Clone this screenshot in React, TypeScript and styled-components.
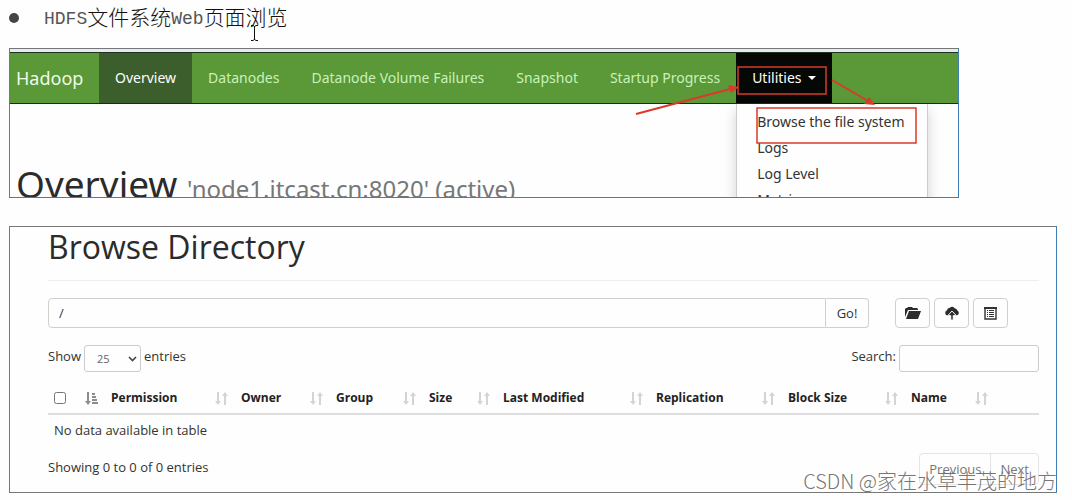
import React from "react";
import styled, { createGlobalStyle } from "styled-components";

const GlobalStyle = createGlobalStyle`
  * { box-sizing: border-box; }
  body {
    margin: 0;
    background: #fdfefd;
    color: #333;
    font-family: "Open Sans", "Noto Sans", "Noto Sans CJK SC", sans-serif;
    font-size: 13px;
    line-height: 20px;
  }
  button, input, select { font: inherit; color: inherit; margin: 0; }
  h1, h2, p, ul { margin: 0; padding: 0; font-weight: 400; }
  ul { list-style: none; }
`;

const Page = styled.main`
  position: relative;
  padding: 4px 15px 0 9px;
`;

const Topic = styled.h2`
  position: relative;
  display: flex;
  align-items: center;
  height: 28px;
  margin-bottom: 16px;
  font-family: "Noto Sans CJK SC", sans-serif;
  font-size: 21px;
  font-weight: 300;
  line-height: 28px;
  color: #111;
  &::before {
    content: "";
    width: 10px;
    height: 10px;
    margin-right: 25px;
    border-radius: 50%;
    background: #444;
  }
`;

const TopicText = styled.span`
  height: 32px;
`;

const Latin = styled.span`
  font-family: "Liberation Mono", monospace;
  font-size: 18px;
  line-height: 20px;
  vertical-align: 1px;
  color: #555;
`;

const TextCursor = styled.svg`
  position: absolute;
  left: 241px;
  top: 21px;
`;

const OverviewPanel = styled.section`
  position: relative;
  height: 150px;
  margin: 0 98px 28px 0;
  border: 1px solid #3f7fb5;
  border-top-color: #777;
  border-left-color: #777;
  padding-top: 3px;
  background: linear-gradient(#e4ecee, #e4ecee) top / 100% 3px no-repeat;
  font-family: "Noto Sans", "Open Sans", sans-serif;
  overflow: hidden;
`;

const NavBar = styled.nav`
  display: flex;
  height: 52px;
  border-top: 1px solid #1c3320;
  border-bottom: 1px solid #17300c;
  background: #5a9838;
  line-height: 50px;
`;

const Brand = styled.a`
  width: 89px;
  padding-left: 6px;
  color: #f0fbe8;
  font-size: 18px;
  text-decoration: none;
`;

const NavList = styled.ul`
  display: flex;
  font-size: 14px;
`;

const NavItem = styled.li`
  position: relative;
`;

const NavLink = styled.a<{ $tone?: "active" | "open" }>`
  display: flex;
  align-items: center;
  gap: 6px;
  padding: 0 16px;
  text-decoration: none;
  white-space: nowrap;
  color: ${(p) => (p.$tone ? "#fff" : "#c9f2b8")};
  background: ${(p) =>
    p.$tone === "active" ? "#3c5e2d" : p.$tone === "open" ? "#050805" : "transparent"};
`;

const Caret = styled.span`
  border: 4px solid transparent;
  border-top-color: #fff;
  border-bottom: 0;
`;

const Menu = styled.ul`
  position: absolute;
  top: 51px;
  left: 0;
  width: 192px;
  padding: 5px 0;
  border: 1px solid #ccc;
  border-top: 0;
  background: #fefefe;
  box-shadow: 0 6px 12px rgba(0, 0, 0, 0.18);
`;

const MenuLink = styled.a`
  display: block;
  padding: 0 20px;
  line-height: 26px;
  white-space: nowrap;
  color: #333;
  text-decoration: none;
`;

const OverviewTitle = styled.h1`
  padding: 56px 0 0 6px;
  font-size: 37px;
  line-height: 48px;
  color: #2b2b2b;
  white-space: nowrap;
  small { font-size: 24px; color: #777; }
`;

const Marks = styled.svg`
  position: absolute;
  left: 0;
  top: 0;
`;

const BrowsePanel = styled.section`
  border: 1px solid #777;
  border-right-color: #3f7fb5;
  padding: 0 17px 7px 38px;
`;

const BrowseTitle = styled.h1`
  padding: 0 0 13px;
  border-bottom: 1px solid #eee;
  margin-bottom: 17px;
  font-size: 32px;
  line-height: 40px;
  color: #2b2b2b;
`;

const Toolbar = styled.form`
  display: flex;
  gap: 4px;
  padding-right: 31px;
  margin-bottom: 17px;
`;

const PathGroup = styled.div`
  display: flex;
  flex: 1;
  margin-right: 22px;
`;

const PathInput = styled.input`
  flex: 1;
  min-width: 0;
  height: 30px;
  padding: 0 10px;
  border: 1px solid #d0d0d0;
  border-radius: 4px 0 0 4px;
  background: #fefefe;
`;

const Button = styled.button<{ $joined?: boolean }>`
  display: flex;
  align-items: center;
  justify-content: center;
  width: ${(p) => (p.$joined ? 43 : 35)}px;
  height: 30px;
  padding: 0;
  border: 1px solid #d0d0d0;
  border-left-width: ${(p) => (p.$joined ? 0 : 1)}px;
  border-radius: ${(p) => (p.$joined ? "0 4px 4px 0" : "4px")};
  background: #fefefe;
`;

const Controls = styled.div`
  display: flex;
  justify-content: space-between;
  height: 27px;
  margin-bottom: 11px;
`;

const Field = styled.label`
  display: flex;
  gap: 3px;
  line-height: 23px;
`;

const SelectWrap = styled.span`
  position: relative;
  svg { position: absolute; right: 4px; top: 11px; pointer-events: none; }
`;

const LengthSelect = styled.select`
  appearance: none;
  width: 57px;
  height: 27px;
  padding: 0 12px;
  border: 1px solid #ccc;
  border-radius: 3px;
  background: #fefefe;
  font-size: 11px;
  color: #666;
`;

const SearchInput = styled.input`
  width: 140px;
  height: 27px;
  border: 1px solid #ccc;
  border-radius: 3px;
  background: #fefefe;
`;

const Table = styled.table`
  width: 100%;
  table-layout: fixed;
  border-collapse: collapse;
  margin-bottom: 9px;
  thead tr { border-bottom: 2px solid #ddd; }
  th, td { padding: 0 7px 0 6px; text-align: left; white-space: nowrap; }
  th { height: 31px; color: #222; font-size: 12px; }
  td { height: 30px; }
`;

const HeadCell = styled.div`
  display: flex;
  align-items: center;
  justify-content: space-between;
  input { width: 12px; height: 12px; }
`;

const Footer = styled.div`
  display: flex;
  justify-content: space-between;
  line-height: 28px;
`;

const Pager = styled.div`
  display: flex;
  height: 32px;
  border: 1px solid #e4e4e4;
  border-radius: 4px;
`;

const PageButton = styled.button`
  padding: 0 9px;
  border: 0;
  background: none;
  color: #777;
  line-height: 28px;
  & + & { border-left: 1px solid #e4e4e4; }
`;

const Watermark = styled.p`
  position: absolute;
  right: 15px;
  bottom: -2px;
  font-family: "Noto Sans CJK SC", sans-serif;
  font-size: 20px;
  font-weight: 300;
  line-height: 28px;
  color: rgba(100, 100, 100, 0.9);
  pointer-events: none;
`;

const SortIcon = () => (
  <svg width="13" height="13" viewBox="0 0 13 13" fill="#d4d4d4" aria-hidden="true">
    <path d="M2 0h2v9h2L3 13 0 9h2zM9 13h2V4h2L10 0 7 4h2z" />
  </svg>
);

const SortedIcon = () => (
  <svg width="13" height="13" viewBox="0 0 13 13" fill="#8c8c8c" aria-hidden="true">
    <path d="M2 0h2v9h2L3 13 0 9h2zM7 1h3v2H7zM7 4h4v2H7zM7 7h5v2H7zM7 10h6v2H7z" />
  </svg>
);

const FolderIcon = () => (
  <svg width="18" height="14" viewBox="0 0 18 14" fill="#2c2c2c" aria-hidden="true">
    <path d="M1 11V3l1-1h1l1-1h4l1 1h4l1 1v1H4z" />
    <path d="M5 5h12l-3 8H2z" />
  </svg>
);

const UploadIcon = () => (
  <svg width="14" height="14" viewBox="0 0 14 14" fill="#2c2c2c" aria-hidden="true">
    <path d="M2.600 9.500A2.700 2.700 0 0 1 2 4.300 3 3 0 0 1 4.800 1.800 3.500 3.500 0 0 1 9.600 2.200 3 3 0 0 1 12.400 4.600 2.600 2.600 0 0 1 11.600 9.500L7 5z" />
    <path d="M7 5l4.200 4.600H8.200V14H5.800V9.600H2.800z" stroke="#fefefe" strokeWidth=".9" />
  </svg>
);

const ListIcon = () => (
  <svg width="13" height="13" viewBox="0 0 13 13" aria-hidden="true">
    <path d="M1 1h11v11H1z" fill="#fff" stroke="#333" strokeWidth="1.400" />
    <path d="M0 0h13v2H0z" fill="#333" />
    <path d="M3 3.500h1M5 3.500h5M3 5.500h1M5 5.500h5M3 7.500h1M5 7.500h5M3 9.500h1M5 9.500h5" stroke="#333" />
  </svg>
);

const columns = [
  { name: "Permission", width: 130 },
  { name: "Owner", width: 95 },
  { name: "Group", width: 93 },
  { name: "Size", width: 74 },
  { name: "Last Modified", width: 153 },
  { name: "Replication", width: 132 },
  { name: "Block Size", width: 123 },
  { name: "Name", width: 90 },
];

const links = ["Datanodes", "Datanode Volume Failures", "Snapshot", "Startup Progress"];
const menu = ["Browse the file system", "Logs", "Log Level", "Metrics"];

export default function App() {
  return (
    <Page>
      <GlobalStyle />
      <Topic>
        <TopicText>
          <Latin>HDFS</Latin>文件系统<Latin>Web</Latin>页面浏览
        </TopicText>
        <TextCursor width="9" height="16" viewBox="0 0 9 16" aria-hidden="true">
          <path d="M1 .5h2l1.500 1 1.500-1h2M4.500 1v14M1 15.500h2l1.500-1 1.500 1h2" fill="none" stroke="#111" />
        </TextCursor>
      </Topic>

      <OverviewPanel>
        <NavBar>
          <Brand href="#">Hadoop</Brand>
          <NavList>
            <NavItem><NavLink href="#" $tone="active">Overview</NavLink></NavItem>
            {links.map((label) => (
              <NavItem key={label}><NavLink href="#">{label}</NavLink></NavItem>
            ))}
            <NavItem>
              <NavLink href="#" $tone="open">Utilities <Caret /></NavLink>
              <Menu>
                {menu.map((label) => (
                  <li key={label}><MenuLink href="#">{label}</MenuLink></li>
                ))}
              </Menu>
            </NavItem>
          </NavList>
        </NavBar>
        <OverviewTitle>
          Overview <small>'node1.itcast.cn:8020' (active)</small>
        </OverviewTitle>
        <Marks width="948" height="148" viewBox="10 49 948 148" fill="none" stroke="#d93a2b" strokeWidth="2" aria-hidden="true">
          <path d="M738 67h88v27h-88zM757 108h159v35H757z" strokeWidth="1.500" />
          <path d="M636 114l94-25M832 80l36 21" />
          <path d="M739 87l-11-2 3 8zM875 105l-6-8-5 7z" fill="#d93a2b" stroke="none" />
        </Marks>
      </OverviewPanel>

      <BrowsePanel>
        <BrowseTitle>Browse Directory</BrowseTitle>
        <Toolbar onSubmit={(e) => e.preventDefault()}>
          <PathGroup>
            <PathInput aria-label="Directory path" defaultValue="/" />
            <Button $joined type="submit">Go!</Button>
          </PathGroup>
          <Button type="button" aria-label="Create directory"><FolderIcon /></Button>
          <Button type="button" aria-label="Upload files"><UploadIcon /></Button>
          <Button type="button" aria-label="Cut and paste"><ListIcon /></Button>
        </Toolbar>
        <Controls>
          <Field>
            Show
            <SelectWrap>
              <LengthSelect defaultValue="25">
                <option>25</option>
                <option>50</option>
                <option>100</option>
              </LengthSelect>
              <svg width="9" height="6" viewBox="0 0 9 6" aria-hidden="true">
                <path d="M1 1l3.500 3.500L8 1" fill="none" stroke="#444" strokeWidth="1.600" />
              </svg>
            </SelectWrap>
            entries
          </Field>
          <Field>Search:<SearchInput type="search" /></Field>
        </Controls>
        <Table>
          <colgroup>
            <col style={{ width: 57 }} />
            {columns.map((c) => <col key={c.name} style={{ width: c.width }} />)}
            <col style={{ width: 44 }} />
          </colgroup>
          <thead>
            <tr>
              <th><HeadCell><input type="checkbox" aria-label="Select all" /><SortedIcon /></HeadCell></th>
              {columns.map((c) => (
                <th key={c.name}><HeadCell>{c.name}<SortIcon /></HeadCell></th>
              ))}
              <th />
            </tr>
          </thead>
          <tbody>
            <tr><td colSpan={10}>No data available in table</td></tr>
          </tbody>
        </Table>
        <Footer>
          <p>Showing 0 to 0 of 0 entries</p>
          <Pager>
            <PageButton>Previous</PageButton>
            <PageButton>Next</PageButton>
          </Pager>
        </Footer>
      </BrowsePanel>
      <Watermark>CSDN @家在水草丰茂的地方</Watermark>
    </Page>
  );
}
